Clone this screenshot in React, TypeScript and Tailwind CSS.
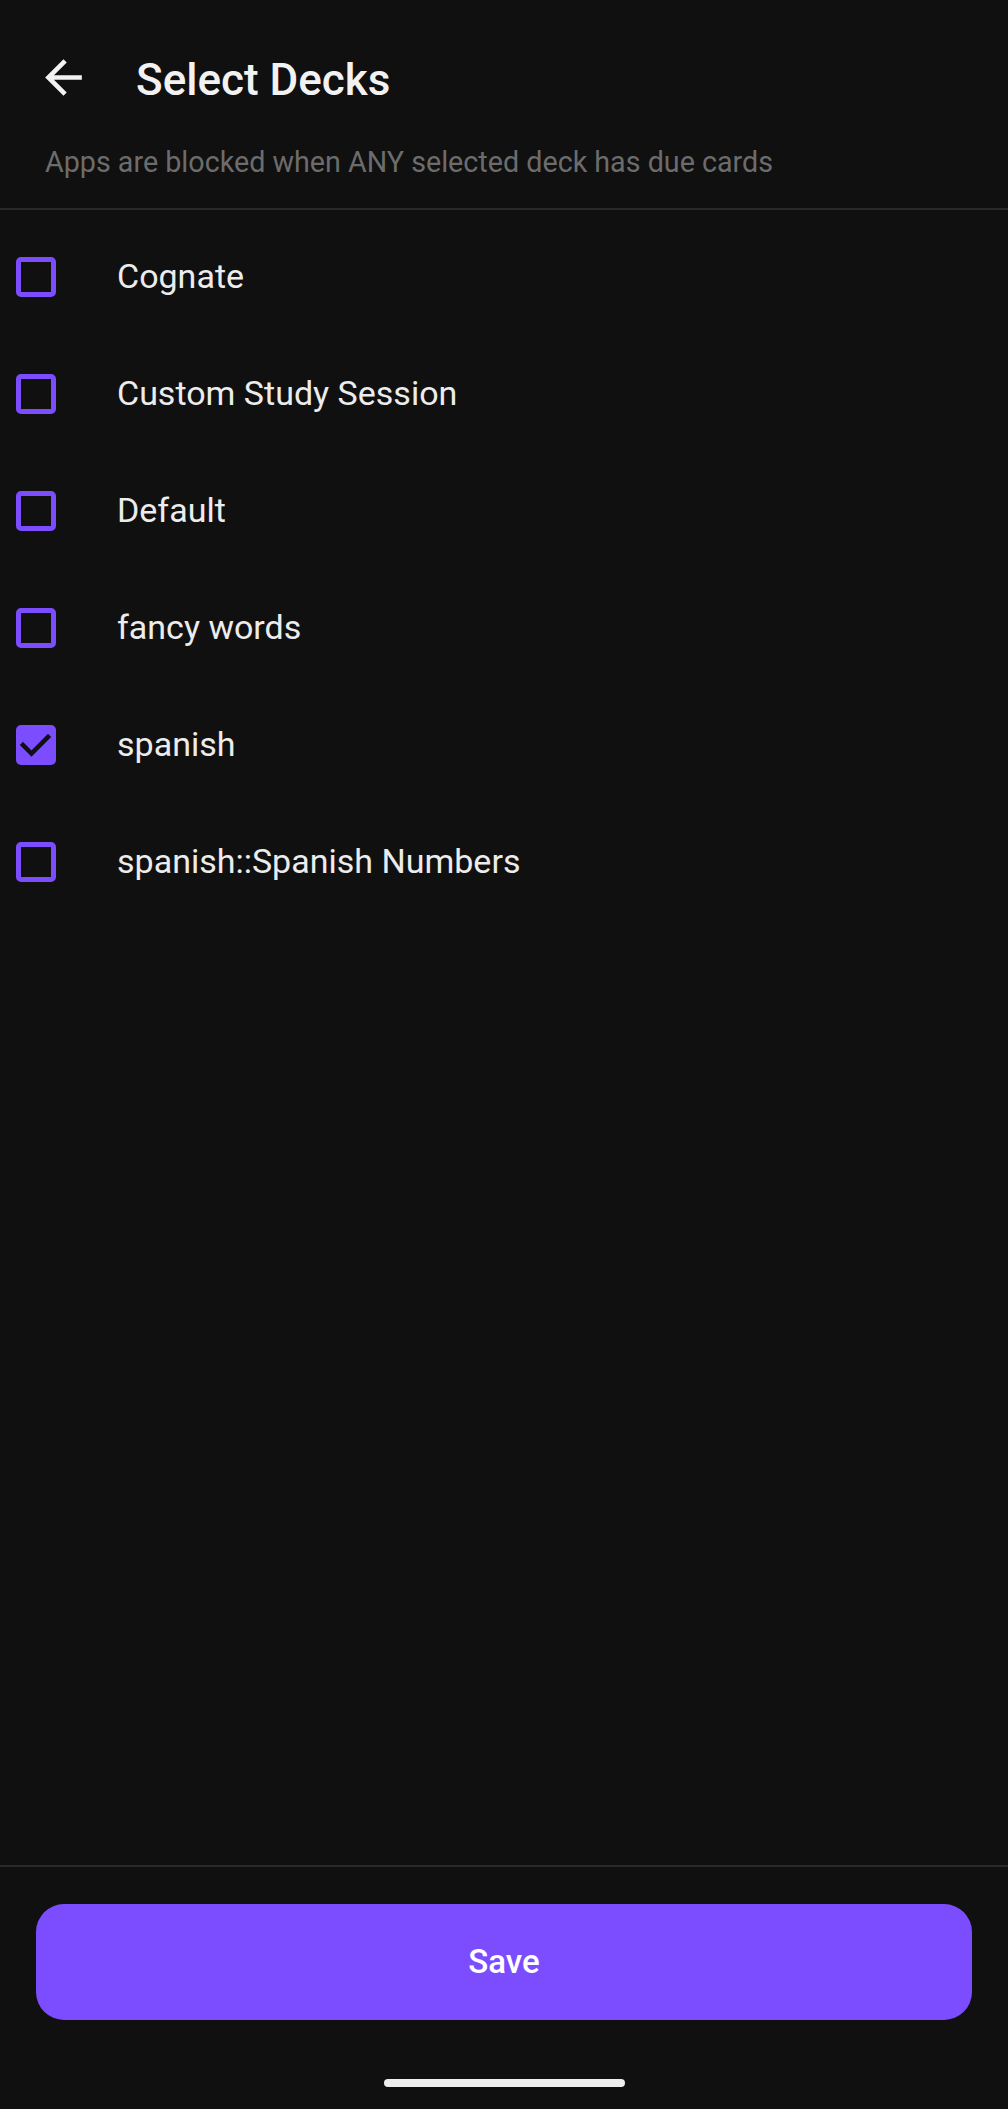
const decks = [
  { name: 'Cognate', checked: false },
  { name: 'Custom Study Session', checked: false },
  { name: 'Default', checked: false },
  { name: 'fancy words', checked: false },
  { name: 'spanish', checked: true },
  { name: 'spanish::Spanish Numbers', checked: false },
]

const Checkbox = ({ checked }: { checked: boolean }) => {
  if (checked) {
    return (
      <div className="w-[40px] h-[40px] rounded-[5px] bg-[#7c4dff] flex items-center justify-center shrink-0">
        <svg width="40" height="40" viewBox="0 0 40 40" fill="none">
          <polyline points="7,20 15.5,28.5 32,12" stroke="#111111" strokeWidth="4.5" strokeLinecap="square" />
        </svg>
      </div>
    )
  }
  return <div className="w-[40px] h-[40px] rounded-[5px] border-[5px] border-[#7c4dff] shrink-0" />
}

export default function App() {
  return (
    <div className="h-[2109px] w-full flex flex-col bg-[#101010] font-[Roboto,sans-serif]">
      {/* header */}
      <div className="pt-[55px] flex items-center h-[105px]">
        <div className="w-[136px] flex items-center pl-[36px] -mt-[5px]">
          <svg width="55" height="55" viewBox="0 0 24 24" fill="#f2f2f2">
            <path d="M20 11H7.83l5.59-5.59L12 4l-8 8 8 8 1.41-1.41L7.83 13H20v-2z" />
          </svg>
        </div>
        <h1 className="text-[44px] leading-[50px] font-medium text-[#f2f2f2]">Select Decks</h1>
      </div>
      <p className="mt-[39px] pl-[45px] text-[28.7px] leading-[36px] text-[#6c6c6c]">
        Apps are blocked when ANY selected deck has due cards
      </p>
      <div className="mt-[28px] h-[2px] bg-[#2a2a2a]" />

      {/* deck list */}
      <div className="flex-1 pt-[8px]">
        {decks.map((d) => (
          <div key={d.name} className="h-[117px] flex items-center pl-[16px]">
            <Checkbox checked={d.checked} />
            <span className="ml-[61px] text-[34px] text-[#ececec]">{d.name}</span>
          </div>
        ))}
      </div>

      {/* footer */}
      <div className="h-[2px] bg-[#2a2a2a]" />
      <div className="px-[36px] pt-[37px]">
        <button className="w-full h-[116px] rounded-[28px] bg-[#7c4dff] text-white text-[33px] font-medium">
          Save
        </button>
      </div>
      <div className="flex justify-center pt-[59px] pb-[22px]">
        <div className="w-[241px] h-[8px] rounded-full bg-[#eeeeee]" />
      </div>
    </div>
  )
}
